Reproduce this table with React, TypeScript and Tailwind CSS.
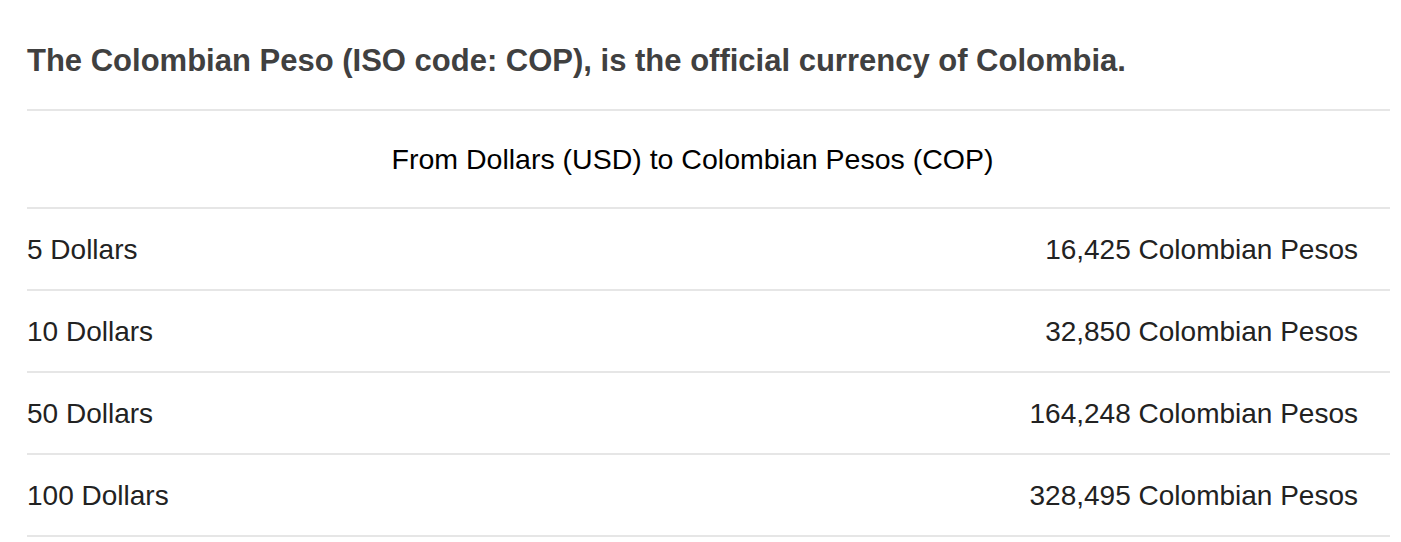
export default function App() {
  const rows = [
    { usd: "5 Dollars", cop: "16,425 Colombian Pesos" },
    { usd: "10 Dollars", cop: "32,850 Colombian Pesos" },
    { usd: "50 Dollars", cop: "164,248 Colombian Pesos" },
    { usd: "100 Dollars", cop: "328,495 Colombian Pesos" },
  ]

  return (
    <div
      className="bg-white pl-[27px] pr-[11px] pt-[43px]"
      style={{ fontFamily: '"Liberation Sans", Arial, sans-serif' }}
    >
      <h1 className="text-[31px] leading-[36px] font-bold text-[#404040] pb-[30px]">
        The Colombian Peso (ISO code: COP), is the official currency of Colombia.
      </h1>

      <div className="border-t-2 border-[#e6e6e6]">
        <div className="pt-[32px] pb-[32px] pr-[32px] text-center text-[28.5px] leading-[32px] font-medium text-black">
          From Dollars (USD) to Colombian Pesos (COP)
        </div>
        {rows.map((row) => (
          <div
            key={row.usd}
            className="flex items-center justify-between border-t-2 border-[#e6e6e6] pt-[25px] pb-[23px] pr-[32px] text-[28px] leading-[32px] text-[#222]"
          >
            <span>{row.usd}</span>
            <span>{row.cop}</span>
          </div>
        ))}
        <div className="border-t-2 border-[#e6e6e6]" />
      </div>
    </div>
  )
}
